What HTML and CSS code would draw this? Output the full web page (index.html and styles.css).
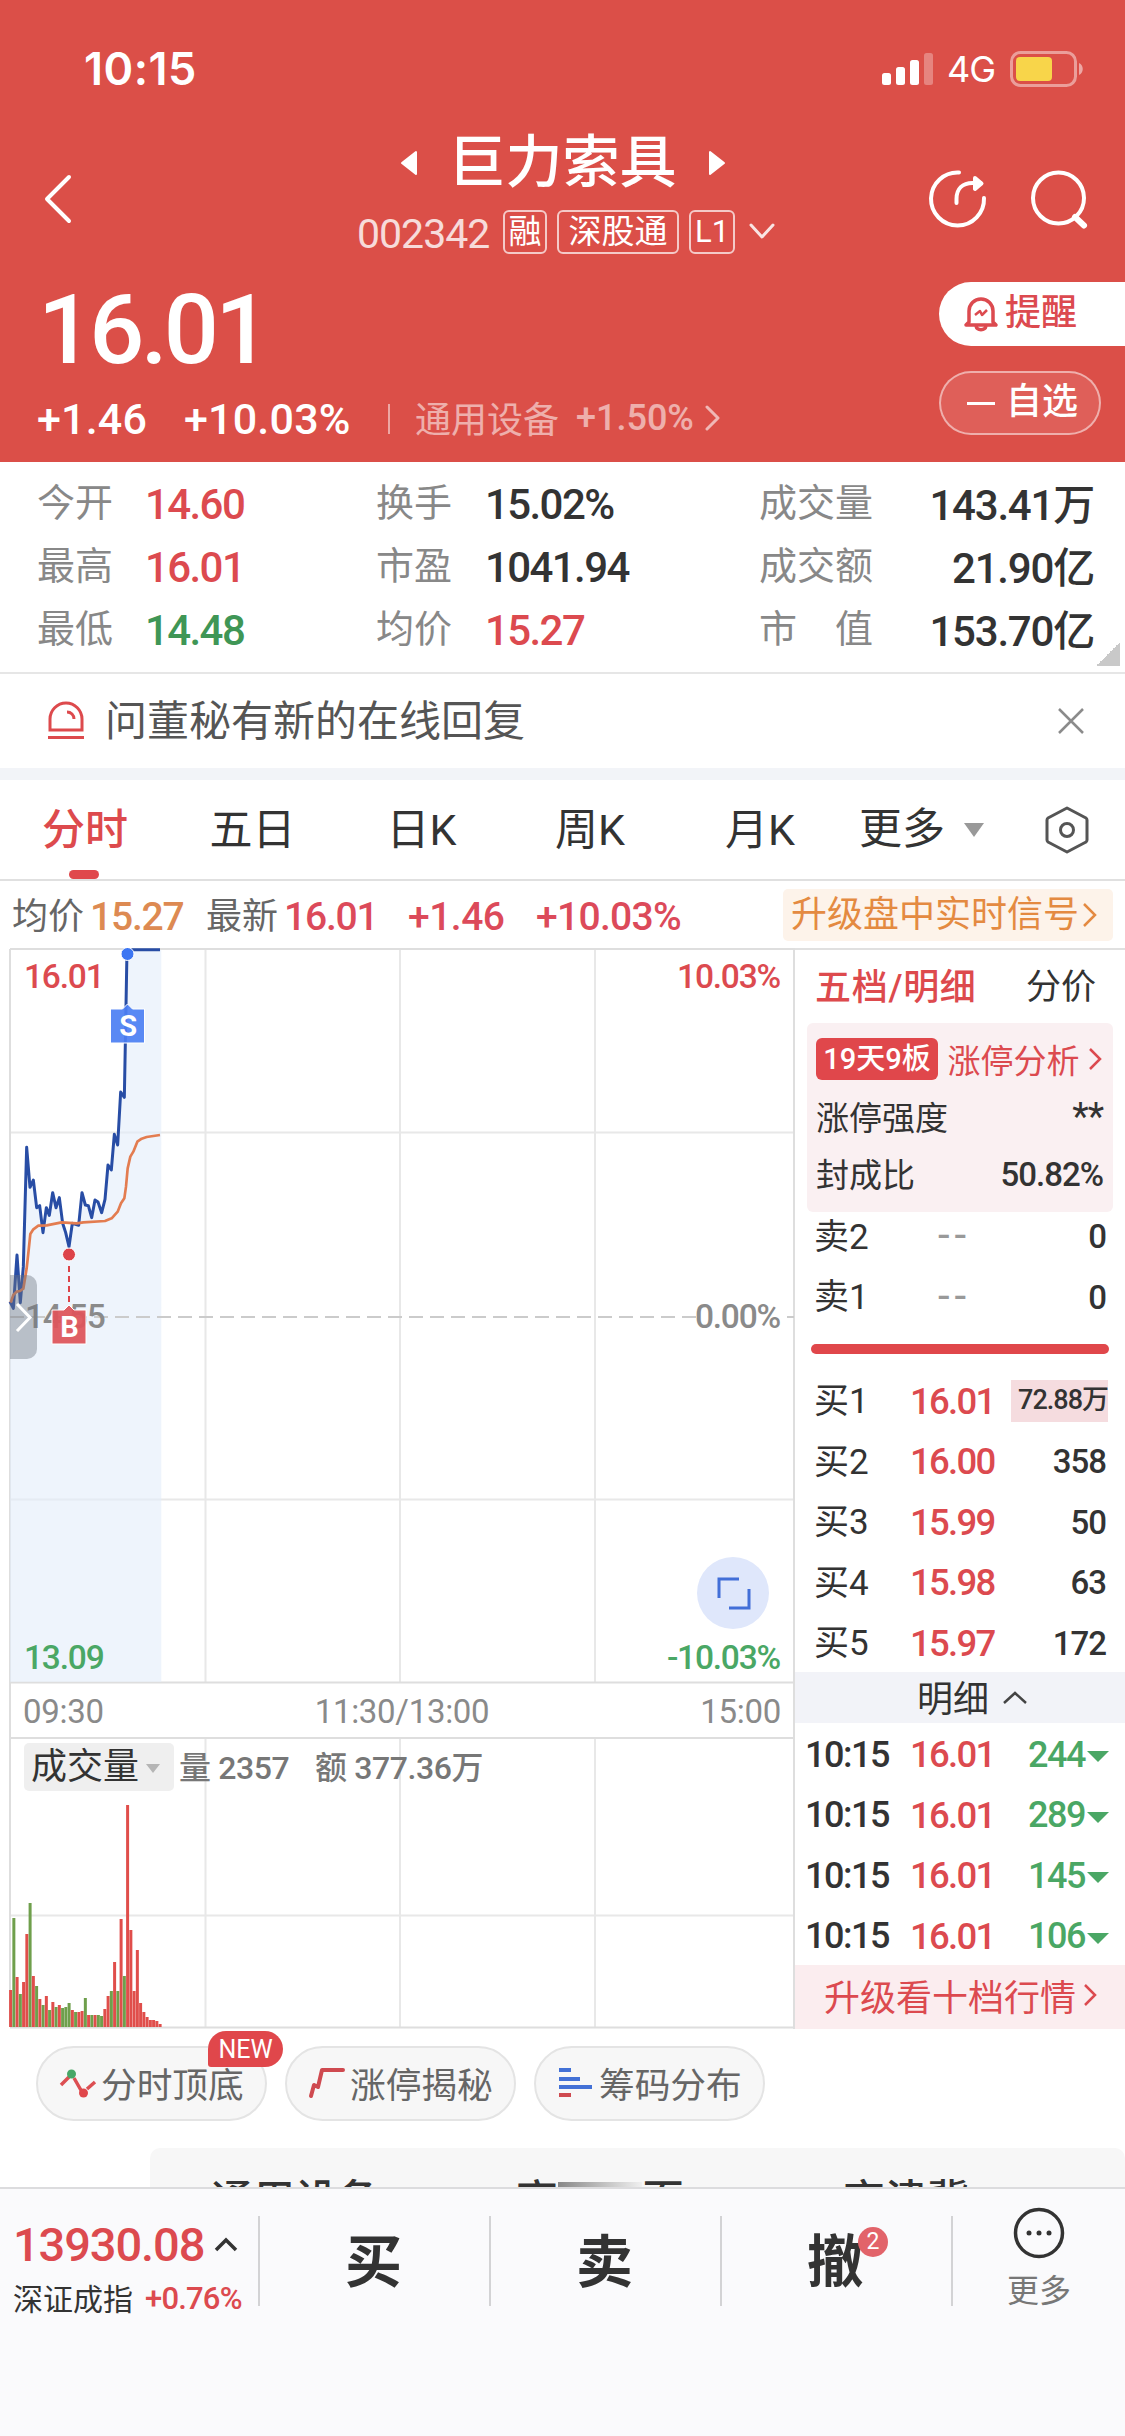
FILE: index.html
```html
<!DOCTYPE html>
<html lang="zh-CN">

<head>
  <meta charset="UTF-8" />
  <meta name="viewport" content="width=device-width, initial-scale=1.0" />
  <title>巨力索具 002342</title>
  <link rel="stylesheet" href="styles.css">
</head>

<body>

  <header>
    <div class="status-bar">
      <span class="clock">10:15</span>
      <div class="status-icons">
        <svg width="52" height="34" viewBox="0 0 52 34" fill="#fff">
          <rect x="0" y="21" width="9" height="12" rx="2.5" />
          <rect x="14" y="15" width="9" height="18" rx="2.5" />
          <rect x="28" y="8" width="9" height="25" rx="2.5" />
          <rect x="42" y="1" width="9" height="32" rx="2.5" opacity=".3" />
        </svg>
        <span class="network">4G</span>
        <svg width="74" height="36" viewBox="0 0 74 36">
          <rect x="1.5" y="1.5" width="64" height="33" rx="9" fill="none" stroke="#fff" stroke-opacity=".45" stroke-width="3" />
          <rect x="6" y="6" width="36" height="24" rx="4" fill="#f8d54a" />
          <path d="M69 12c5 2 5 10 0 12z" fill="#fff" fill-opacity=".5" />
        </svg>
      </div>
    </div>

    <div class="nav">
      <svg class="back" width="30" height="50" viewBox="0 0 30 50"><path d="M26 3L4 25l22 22" /></svg>
      <div class="title">
        <div class="name">
          <svg width="20" height="26" viewBox="0 0 20 26"><path d="M17 2v22L3 13z" /></svg>
          <h1>巨力索具</h1>
          <svg width="20" height="26" viewBox="0 0 20 26"><path d="M3 2v22l14-11z" /></svg>
        </div>
        <div class="code">
          <span class="num">002342</span>
          <span class="tag">融</span>
          <span class="tag wide">深股通</span>
          <span class="tag l1">L1</span>
          <svg width="26" height="18" viewBox="0 0 26 18"><path d="M2 2l11 12L24 2" /></svg>
        </div>
      </div>
      <div class="nav-icons">
        <svg width="60" height="60" viewBox="0 0 60 60">
          <path d="M31 3.500A26.500 26.500 0 1 0 56 29" />
          <path d="M28.500 34v-4c0-10 6-16 16-16h8" />
          <path d="M47 9l6.500 5.500L47 20z" fill="#fff" />
        </svg>
        <svg width="60" height="60" viewBox="0 0 60 60">
          <circle cx="28.500" cy="29" r="25.500" />
          <path d="M45 48l9 8.500" stroke-width="6" />
        </svg>
      </div>
    </div>

    <div class="quote">
      <div>
        <div class="price">16.01</div>
        <div class="change">
          <b>+1.46</b><b>+10.03%</b>
          <i></i>
          <span>通用设备</span><em>+1.50%</em>
          <svg width="16" height="28" viewBox="0 0 16 28"><path d="M2 3l11 11L2 25" /></svg>
        </div>
      </div>
      <div class="actions">
        <div class="remind">
          <svg width="36" height="38" viewBox="0 0 36 38">
            <path d="M6 27V16a12 12 0 0 1 24 0v11l3 3H3z" />
            <path d="M13 31c1 5 9 5 10 0" />
            <path d="M12 20l5-4 2 4 5-5" stroke-width="2.500" />
          </svg>
          <span>提醒</span>
        </div>
        <div class="select"><i></i><span>自选</span></div>
      </div>
    </div>
  </header>

  <section class="stats">
    <span>今开</span><b class="red">14.60</b><span>换手</span><b>15.02%</b><span>成交量</span><b class="right">143.41万</b>
    <span>最高</span><b class="red">16.01</b><span>市盈</span><b>1041.94</b><span>成交额</span><b class="right">21.90亿</b>
    <span>最低</span><b class="green">14.48</b><span>均价</span><b class="red">15.27</b><span>市　值</span><b class="right">153.70亿</b>
  </section>

  <section class="notice">
    <svg width="40" height="40" viewBox="0 0 40 40" fill="none" stroke="#dd4a4d" stroke-width="3">
      <path d="M4 29V18a16 16 0 0 1 32 0v11z" /><path d="M2 36.500h36" /><path d="M21 11c4 0 7 3 7 7" />
    </svg>
    <p>问董秘有新的在线回复</p>
    <svg width="28" height="28" viewBox="0 0 28 28" stroke="#8b8b8b" stroke-width="2.500"><path d="M2 2l24 24M26 2L2 26" /></svg>
  </section>

  <nav class="tabs">
    <span class="active">分时</span><span>五日</span><span>日K</span><span>周K</span><span>月K</span>
    <span class="more">更多<svg width="24" height="16" viewBox="0 0 24 16"><path d="M2 1h20L12 15z" fill="#999" /></svg></span>
    <svg width="46" height="50" viewBox="0 0 46 50" fill="none" stroke="#555" stroke-width="3">
      <path d="M23 3l19 10q1 1 1 2v20q0 1-1 2L23 47 4 37q-1-1-1-2V15q0-1 1-2z" stroke-linejoin="round" />
      <circle cx="23" cy="25" r="6.500" />
    </svg>
  </nav>

  <section class="summary">
    <span>均价</span><b class="orange">15.27</b>
    <span>最新</span><b>16.01</b><b class="diff">+1.46</b><b class="pct">+10.03%</b>
    <div class="signal">升级盘中实时信号<svg width="18" height="28" viewBox="0 0 18 28"><path d="M3 3l11 11L3 25" /></svg></div>
  </section>

  <main>
    <svg class="chart" width="795" height="1081" viewBox="0 948 795 1081">
      <g class="grid">
        <path d="M10 1132.500H794M10 1499.500H794M10 1915.500H794" />
        <path d="M205.500 949V1682M400 949V1682M595 949V1682M205.500 1738V2027M400 1738V2027M595 1738V2027" />
        <path class="frame" d="M10 949H795M10 1682.500H794M10 1738H794M10 2027.500H795M10 949V2027M794 949V2029" />
      </g>
      <!-- price and average lines -->
      <g transform="translate(0 940) scale(.33333)">
        <path class="area" d="M30 1085L40 1105 51 945 61 1088 70 980 80 622 90 742 100 720 110 803 119 797 129 878 139 803 148 826 158 758 168 803 178 773 188 850 197 878 207 920 217 850 236 856 246 758 256 795 265 797 275 833 285 780 294 786 305 818 315 778 324 675 334 690 343 583 353 615 362 456 373 472 376 310 381 30 484 30V2225H30z" />
        <path class="line" d="M30 1085L40 1105 51 945 61 1088 70 980 80 622 90 742 100 720 110 803 119 797 129 878 139 803 148 826 158 758 168 803 178 773 188 850 197 878 207 920 217 850 236 856 246 758 256 795 265 797 275 833 285 780 294 786 305 818 315 778 324 675 334 690 343 583 353 615 362 456 373 472 376 310 381 29 480 29" />
        <path class="avg" d="M32 1088L40 1065 50 1055 60 1053 70 1046 80 985 86 930 91 882 100 868 115 857 140 856 185 847 230 850 250 847 315 843 335 835 353 815 363 790 373 775 378 740 383 685 391 650 400 635 412 605 425 596 440 591 480 585" />
      </g>
      <path class="zero" d="M10 1317H794" />
      <rect x="696" y="1300" width="86" height="34" fill="#fff" />
      <text x="25" y="1328" class="gray">14.55</text>
      <path d="M10 1275h17a10 10 0 0 1 10 10v64a10 10 0 0 1-10 10H10z" fill="#6e7480" fill-opacity=".42" />
      <path d="M17 1304l13 13.500L17 1331" fill="none" stroke="#fff" stroke-width="3" />

      <circle cx="127.500" cy="954" r="6.500" fill="#3d76f2" stroke="#fff" />
      <path d="M110.500 1009h12l5-5 5 5h12v34h-34z" fill="#4c7ff3" fill-opacity=".92" stroke="#fff" />
      <text x="127.500" y="1036" class="mark">S</text>
      <circle cx="69" cy="1254.500" r="6.500" fill="#dd4349" stroke="#fff" />
      <path d="M69 1266v36" stroke="#dd4349" stroke-width="2" stroke-dasharray="6 4" />
      <path d="M52 1310h12l5-5 5 5h12v34H52z" fill="#de555b" fill-opacity=".94" stroke="#fff" />
      <text x="69" y="1337" class="mark">B</text>

      <text x="24" y="988" class="red">16.01</text>
      <text x="780" y="988" class="red end">10.03%</text>
      <text x="780" y="1328" class="gray end">0.00%</text>
      <text x="24" y="1669" class="green">13.09</text>
      <text x="780" y="1669" class="green end">-10.03%</text>
      <circle cx="733" cy="1593" r="36" fill="#dfe7fb" />
      <path d="M719 1598v-19h20M729 1608h20v-19" fill="none" stroke="#426fd8" stroke-width="3" />

      <text x="23" y="1723" class="gray time">09:30</text>
      <text x="402" y="1723" class="gray time mid">11:30/13:00</text>
      <text x="781" y="1723" class="gray time end">15:00</text>

      <rect x="24" y="1743" width="150" height="48" rx="5" fill="#efefef" />
      <text x="31" y="1779" class="vol-name">成交量</text>
      <path d="M146 1764h14l-7 9z" fill="#b5b5b5" />
      <text x="179" y="1779" class="vol">量 2357</text>
      <text x="315" y="1779" class="vol">额 377.36万</text>
      <g id="bars"></g>
    </svg>

    <aside>
      <div class="book-tabs"><b>五档/明细</b><span>分价</span></div>
      <div class="limit-box">
        <div><i>19天9板</i><a>涨停分析</a><svg width="14" height="24" viewBox="0 0 14 24"><path d="M1 2l10 10L1 22" /></svg></div>
        <div><span>涨停强度</span><em class="stars">**</em></div>
        <div><span>封成比</span><em>50.82%</em></div>
      </div>
      <div class="book sell">
        <div><span>卖2</span><u>--</u><em>0</em></div>
        <div><span>卖1</span><u>--</u><em>0</em></div>
      </div>
      <div class="ratio"></div>
      <div class="book">
        <div><span>买1</span><b>16.01</b><em class="hot">72.88万</em></div>
        <div><span>买2</span><b>16.00</b><em>358</em></div>
        <div><span>买3</span><b>15.99</b><em>50</em></div>
        <div><span>买4</span><b>15.98</b><em>63</em></div>
        <div><span>买5</span><b>15.97</b><em>172</em></div>
      </div>
      <div class="detail-head">明细<svg width="26" height="16" viewBox="0 0 26 16"><path d="M2 13L13 3l11 10" /></svg></div>
      <div class="trades" id="trades"></div>
      <div class="upgrade">升级看十档行情<svg width="16" height="26" viewBox="0 0 16 26"><path d="M2 3l10 10L2 23" /></svg></div>
    </aside>
  </main>

  <section class="tools">
    <div class="pill">
      <svg width="38" height="34" viewBox="0 0 38 34" fill="none" stroke="#dc4f52" stroke-width="3.500">
        <path d="M2 19l8-8M15 12l8 14M28 23l8-7" /><circle cx="12.500" cy="8" r="4.500" fill="#47a767" stroke="none" /><circle cx="24.500" cy="27" r="4.500" fill="#e0474b" stroke="none" />
      </svg>分时顶底
      <span class="new">NEW</span>
    </div>
    <div class="pill">
      <svg width="38" height="34" viewBox="0 0 38 34" fill="none" stroke="#cf4a50" stroke-width="4" stroke-linecap="round" stroke-linejoin="round"><path d="M3 30l3-11 4 2 4-17h21" /></svg>涨停揭秘
    </div>
    <div class="pill">
      <svg width="38" height="34" viewBox="0 0 38 34" fill="none" stroke="#4371d6" stroke-width="4"><path d="M2 4h12M2 13h21M2 21h33" /><path d="M2 29h12" stroke="#cf4a50" /></svg>筹码分布
    </div>
  </section>

  <section class="related"><span>通用设备</span><span class="gap">高<i></i>页</span><span>京津冀</span></section>

  <footer>
    <div class="index">
      <div><b>13930.08</b><svg width="24" height="18" viewBox="0 0 24 18"><path d="M2 14L12 4l10 10" /></svg></div>
      <div class="sub"><span>深证成指</span><em>+0.76%</em></div>
    </div>
    <div class="trade">买</div>
    <div class="trade">卖</div>
    <div class="trade"><span>撤<i>2</i></span></div>
    <div class="menu">
      <svg width="52" height="52" viewBox="0 0 52 52"><circle cx="26" cy="26" r="23.500" fill="none" stroke="#333" stroke-width="3.500" /><g fill="#333"><circle cx="16" cy="26" r="2.500" /><circle cx="26" cy="26" r="2.500" /><circle cx="36" cy="26" r="2.500" /></g></svg>
      更多
    </div>
  </footer>

  <script>
    // one bar per minute: direction + height in px
    const volumes = "r37 g109 r50 g33 r45 r93 g124 r51 g41 r28 g22 r31 g17 r25 g20 r22 g19 g20 g24 r17 g15 r15 r16 g29 r12 g12 r12 g12 g11 r18 r31 g36 r65 g36 r108 g51 r222 r97 r36 r77 r24 r15 r10 r7 r7 r6 r3".split(" ");

    document.getElementById("bars").innerHTML = volumes.map((v, i) => {
      const h = Number(v.slice(1));
      return `<rect class="bar-${v[0]}" x="${9.1 + i * 3.25}" y="${2027 - h}" width="3" height="${h}" />`;
    }).join("");

    document.getElementById("trades").innerHTML = [244, 289, 145, 106].map(n => `
      <div><span>10:15</span><b>16.01</b><em>${n}<svg width="22" height="12" viewBox="0 0 22 12"><path d="M0 0h22L11 11z" /></svg></em></div>`).join("");
  </script>
</body>

</html>
```
FILE: styles.css
```css
* {
  box-sizing: border-box;
}

body {
  margin: 0;
  width: 1125px;
  height: 2436px;
  overflow: hidden;
  background: #fff;
  color: #333;
  font-family: Roboto, "Noto Sans CJK SC", sans-serif;
}

svg {
  display: block;
  flex: none;
}

b,
em,
i,
u {
  font-style: normal;
  text-decoration: none;
}

b {
  font-weight: 500;
}

.red {
  color: #dc4a4f;
  fill: #dc4a4f;
}

.green {
  color: #3f9656;
  fill: #4aa765;
}

/* header */
header {
  height: 462px;
  background: #db4f48;
  color: #fff;
}

.status-bar {
  height: 138px;
  padding: 0 41px 0 84px;
  display: flex;
  justify-content: space-between;
  align-items: center;
}

.clock {
  font: 600 45px/50px Inter, sans-serif;
  letter-spacing: .5px;
}

.status-icons {
  display: flex;
  align-items: center;
}

.network {
  width: 48px;
  margin: 0 15px 0 13px;
  font: 400 36px/40px Inter, sans-serif;
  letter-spacing: -1px;
}

.nav {
  height: 129px;
  display: flex;
  justify-content: space-between;
}

.nav svg,
.change svg {
  fill: none;
  stroke: #fff;
  stroke-width: 4;
  stroke-linecap: round;
  stroke-linejoin: round;
}

.back {
  margin: 36px 0 0 43px;
}

.title {
  width: 422px;
  margin-left: 226px;
}

.name {
  height: 50px;
  padding-right: 8px;
  display: flex;
  align-items: center;
  justify-content: center;
  gap: 30px;
}

.name .name svg,
.name svg {
  fill: #fff;
  stroke-width: 2;
}

h1 {
  margin: 0;
  font-size: 57px;
  line-height: 50px;
  font-weight: 500;
}

.code {
  height: 44px;
  margin-top: 22px;
  display: flex;
  align-items: center;
  justify-content: center;
  font-size: 41px;
}

.code .num {
  width: 134px;
  margin: 3px 12px 0 -1px;
  opacity: .8;
  letter-spacing: -1px;
}

.code svg {
  width: 26px;
  margin-left: 14px;
  stroke-width: 3;
  opacity: .85;
}

.tag {
  width: 44px;
  height: 44px;
  margin-right: 10px;
  border: 2px solid rgba(255, 255, 255, .7);
  border-radius: 6px;
  font-size: 33px;
  line-height: 39px;
  text-align: center;
}

.tag.wide {
  width: 122px;
}

.tag.l1 {
  width: 46px;
  margin: 0;
  font-size: 31px;
}

.nav-icons {
  display: flex;
  gap: 42px;
  margin: 31px 35px 0 94px;
}

.quote {
  display: flex;
  justify-content: space-between;
}

.price {
  height: 90px;
  margin: 18px 0 0 38px;
  font-size: 97px;
  line-height: 90px;
  font-weight: 500;
  letter-spacing: -3.8px;
}

.change {
  height: 50px;
  margin: 19px 0 0 37px;
  display: flex;
  align-items: center;
  font-size: 43px;
}

.change b:first-child {
  width: 147px;
}

.change b {
  width: 204px;
  letter-spacing: .2px;
}

.change i {
  width: 2px;
  height: 30px;
  margin-right: 25px;
  background: rgba(255, 255, 255, .5);
}

.change span {
  width: 161px;
  margin-top: -4px;
  font-size: 36px;
  opacity: .55;
}

.change em {
  width: 129px;
  margin-top: -2px;
  font-size: 36px;
  font-weight: 500;
  opacity: .55;
}

.change svg {
  margin-top: -3px;
  stroke-width: 3;
  opacity: .6;
}

.actions {
  width: 186px;
  padding-top: 15px;
}

.remind,
.select {
  height: 64px;
  display: flex;
  align-items: center;
  font-size: 36px;
  line-height: 50px;
  font-weight: 500;
}

.actions span {
  margin-top: -2px;
}

.remind {
  padding-left: 24px;
  gap: 6px;
  background: #fff;
  color: #dc4a4f;
  border-radius: 32px 0 0 32px;
}

.remind svg {
  fill: none;
  stroke: #dc4a4f;
  stroke-width: 3.5;
  stroke-linejoin: round;
}

.select {
  width: 162px;
  margin-top: 25px;
  padding-left: 26px;
  gap: 11px;
  background: #df5f59;
  border: 2px solid rgba(255, 255, 255, .5);
  border-radius: 32px;
}

.select i {
  width: 28px;
  height: 3px;
  background: #fff;
}

/* stats */
.stats {
  height: 212px;
  padding: 9px 31px 12px 37px;
  border-bottom: 2px solid #e6e6e6;
  display: grid;
  grid-template-columns: 108px 231px 109px 274px 125px 1fr;
  grid-template-rows: repeat(3, 63px);
  align-items: center;
  font-size: 38px;
  background: linear-gradient(135deg, transparent 50%, #c9c9c9 50%) 1096px 180px / 24px 24px no-repeat;
}

.stats span {
  margin-top: -6px;
  color: #888;
}

.stats b {
  margin-top: 4px;
  font-size: 42px;
  letter-spacing: -1.6px;
}

.stats .right {
  margin-top: -2px;
  text-align: right;
  white-space: nowrap;
  letter-spacing: -1.2px;
}

/* notice */
.notice {
  height: 106px;
  padding: 0 40px 0 46px;
  border-bottom: 12px solid #f2f4f8;
  display: flex;
  align-items: center;
}

.notice p {
  flex: 1;
  margin: 2px 0 0 19px;
  font-size: 42px;
  line-height: 60px;
  color: #555;
}

/* period tabs */
.tabs {
  height: 101px;
  border-bottom: 2px solid #e0e0e0;
  display: grid;
  grid-template-columns: 170px 165px 173px 164px 176px 196px 46px;
  align-items: center;
  text-align: center;
  font-size: 43px;
}

.tabs span {
  height: 99px;
  line-height: 101px;
}

.tabs .active {
  position: relative;
  color: #dd4a4d;
  font-weight: 500;
}

.tabs .active::after {
  content: "";
  position: absolute;
  left: 69px;
  bottom: 0;
  width: 30px;
  height: 9px;
  border-radius: 5px;
  background: #e0484c;
}

.tabs .more {
  display: flex;
  align-items: center;
  padding-left: 11px;
  gap: 17px;
}

.summary {
  height: 67px;
  padding: 0 12px;
  display: flex;
  align-items: center;
  font-size: 36px;
  color: #666;
}

.summary b {
  width: 123px;
  margin: 4px 0 0 6px;
  font-size: 39px;
  letter-spacing: -1.2px;
  color: #dc4a5a;
}

.summary .orange {
  width: 116px;
  color: #dd8a52;
}

.summary span {
  width: 72px;
  margin-top: -3px;
  white-space: nowrap;
}

.summary b.diff {
  width: 128px;
  margin-left: 1px;
  letter-spacing: -.5px;
}

.summary b.pct {
  margin-left: 0;
  width: 150px;
  letter-spacing: -.7px;
}

.signal {
  height: 52px;
  margin-left: auto;
  width: 330px;
  padding-left: 8px;
  border-radius: 5px;
  display: flex;
  align-items: center;
  gap: 2px;
  background: #fdf3ea;
  color: #e48a41;
  line-height: 50px;
  white-space: nowrap;
}

.signal svg {
  fill: none;
  stroke: #e48a41;
  stroke-width: 2.5;
}

/* chart */
main {
  height: 1081px;
  display: flex;
}

.chart text {
  font-size: 33.5px;
  font-weight: 500;
  letter-spacing: -1.2px;
}

.chart .gray {
  fill: #8a8a8a;
}

.chart text.time {
  font-size: 33px;
  font-weight: 400;
  letter-spacing: -.3px;
}

.chart .end {
  text-anchor: end;
}

.chart .mid {
  text-anchor: middle;
}

.grid path {
  fill: none;
  stroke: #e8e8e8;
  stroke-width: 2;
}

.grid .frame {
  stroke: #dedede;
}

.area {
  fill: #e3ecfa;
  fill-opacity: .6;
}

.line,
.avg {
  fill: none;
  stroke: #284da5;
  stroke-width: 9;
  stroke-linejoin: round;
}

.avg {
  stroke: #e37c50;
  stroke-width: 8;
}

.zero {
  stroke: #cbcbcb;
  stroke-width: 2;
  stroke-dasharray: 14 7;
}

.chart .mark {
  fill: #fff;
  font-size: 29px;
  font-weight: 700;
  text-anchor: middle;
}

.chart text.vol-name {
  font-size: 36px;
  font-weight: 400;
  letter-spacing: 0;
  fill: #333;
}

.chart text.vol {
  font-size: 32px;
  font-weight: 500;
  letter-spacing: -.4px;
  fill: #777;
}

.bar-r {
  fill: #e04e4b;
}

.bar-g {
  fill: #6f9f4c;
}

/* order book */
aside {
  width: 330px;
  border-top: 2px solid #e0e0e0;
}

aside svg {
  fill: none;
  stroke: #dc4a4f;
  stroke-width: 2.5;
}

.book-tabs {
  height: 73px;
  padding: 0 29px 6px 20px;
  display: flex;
  justify-content: space-between;
  align-items: center;
  font-size: 35px;
}

.book-tabs b {
  font-size: 36px;
  letter-spacing: .7px;
  color: #dd4a4d;
}

.limit-box {
  height: 189px;
  margin: 0 12px;
  padding: 7px 10px 10px 9px;
  border-radius: 6px;
  background: #faf0f2;
}

.limit-box div {
  height: 57px;
  display: flex;
  align-items: center;
  justify-content: space-between;
  font-size: 33px;
}

.limit-box i {
  width: 122px;
  height: 42px;
  border-radius: 6px;
  background: #e0474b;
  color: #fff;
  font-size: 29px;
  font-weight: 500;
  line-height: 43px;
  text-align: center;
  white-space: nowrap;
}

.limit-box a {
  color: #dc4a4f;
}

.limit-box em {
  margin-top: 3px;
  font-weight: 500;
  letter-spacing: -1px;
}

.limit-box .stars {
  font-weight: 400;
  font-size: 38px;
  line-height: 28px;
}

.book div,
.trades div {
  height: 60.5px;
  padding: 0 19px;
  display: grid;
  grid-template-columns: 96px 90px 1fr;
  align-items: center;
  font-size: 35px;
}

.book span {
  margin-top: -4px;
}

.book b,
.trades b {
  margin-top: 3px;
  color: #dc4a4f;
  font-size: 36.5px;
  letter-spacing: -1.7px;
}

.book u {
  padding-left: 28px;
  color: #999;
  font-size: 42px;
  line-height: 40px;
  letter-spacing: 5px;
}

.book em {
  margin-top: 3px;
  justify-self: end;
  font-size: 33px;
  font-weight: 500;
  letter-spacing: -1px;
}

.book.sell {
  margin-top: -7px;
}

.book .hot {
  width: 97px;
  height: 42px;
  margin-right: -2px;
  background: #f5dcdf;
  font-size: 27px;
  line-height: 41px;
  text-align: right;
  white-space: nowrap;
}

.ratio {
  height: 10px;
  margin: 18px 16px 15.5px;
  border-radius: 5px;
  background: #e0474b;
}

.detail-head {
  height: 51px;
  display: flex;
  align-items: center;
  justify-content: center;
  gap: 13px;
  padding: 0 0 3px 25px;
  background: #f2f3f8;
  font-size: 36px;
}

.detail-head svg {
  margin-top: 4px;
  stroke: #444;
}

.trades div {
  height: 60.5px;
  padding: 0 16px 0 10px;
  grid-template-columns: 105px 90px 1fr;
}

.trades span {
  margin-top: 3px;
  font-size: 36px;
  font-weight: 500;
  letter-spacing: -1.5px;
}

.trades em {
  margin-top: 3px;
  display: flex;
  align-items: center;
  justify-self: end;
  font-size: 36px;
  font-weight: 500;
  color: #4aa765;
  gap: 2px;
  letter-spacing: -1.5px;
}

.trades svg {
  margin-top: 5px;
  fill: #4aa765;
  stroke: none;
}

.upgrade {
  height: 64px;
  padding: 0 0 4px 29px;
  display: flex;
  align-items: center;
  gap: 7px;
  background: #fbedef;
  color: #dc4a4f;
  font-size: 36px;
}

/* tool pills */
.tools {
  height: 119px;
  padding: 17px 36px;
  display: flex;
  gap: 18px;
}

.pill {
  position: relative;
  width: 231px;
  height: 75px;
  padding: 0 0 2px 21px;
  border: 2px solid #e4e4e4;
  border-radius: 38px;
  background: #f7f7f7;
  display: flex;
  align-items: center;
  gap: 4px;
  font-size: 35.7px;
  color: #666;
  white-space: nowrap;
}

.new {
  position: absolute;
  left: 170px;
  top: -17px;
  width: 75px;
  height: 36px;
  border-radius: 18px 18px 18px 3px;
  background: #e0474b;
  color: #fff;
  font-size: 25px;
  line-height: 37px;
  text-align: center;
}

/* first row of the related boards, the rest sits under the bottom bar */
.related {
  height: 39px;
  margin-left: 150px;
  padding-left: 61px;
  border-radius: 10px 10px 0 0;
  background: #f7f7f7;
  overflow: hidden;
  display: flex;
  font-size: 42px;
  font-weight: 500;
  line-height: 106px;
}

.related span {
  flex: none;
  width: 305px;
}

.related .gap {
  display: flex;
  width: 327px;
}

.related i {
  width: 84px;
  height: 5px;
  margin-top: 34px;
  background: linear-gradient(90deg, #888, #f0f0f0);
}

/* bottom bar */
footer {
  height: 249px;
  border-top: 2px solid #dcdcde;
  background: #fafafc;
  display: flex;
  padding-top: 27px;
}

.index {
  width: 258px;
  height: 90px;
  padding-left: 13px;
}

.index div {
  display: flex;
  align-items: center;
  height: 57px;
}

.index div.sub {
  margin-top: -5px;
}

.index b {
  width: 201px;
  font-size: 47px;
  letter-spacing: -1.1px;
  color: #dc4a4f;
}

.index svg {
  fill: none;
  stroke: #333;
  stroke-width: 3.5;
}

.index span {
  width: 132px;
  font-size: 30px;
}

.index em {
  margin-top: 3px;
  font-size: 31px;
  font-weight: 500;
  letter-spacing: -.8px;
  color: #dc4a4f;
}

.trade {
  width: 231px;
  height: 90px;
  padding-right: 2px;
  border-left: 2px solid #d3d3d5;
  text-align: center;
  font-size: 57px;
  font-weight: 700;
  line-height: 94px;
}

.trade span {
  position: relative;
}

.trade i {
  position: absolute;
  right: -24px;
  top: -2px;
  width: 30px;
  height: 30px;
  border-radius: 50%;
  background: #e2636a;
  color: #fff;
  font-size: 23px;
  line-height: 30px;
  font-weight: 400;
}

.menu {
  width: 174px;
  height: 90px;
  border-left: 2px solid #d3d3d5;
  display: flex;
  flex-direction: column;
  align-items: center;
  font-size: 32px;
  line-height: 44px;
  color: #777;
}

.menu svg {
  margin: -9px 0 10px;
}
```
